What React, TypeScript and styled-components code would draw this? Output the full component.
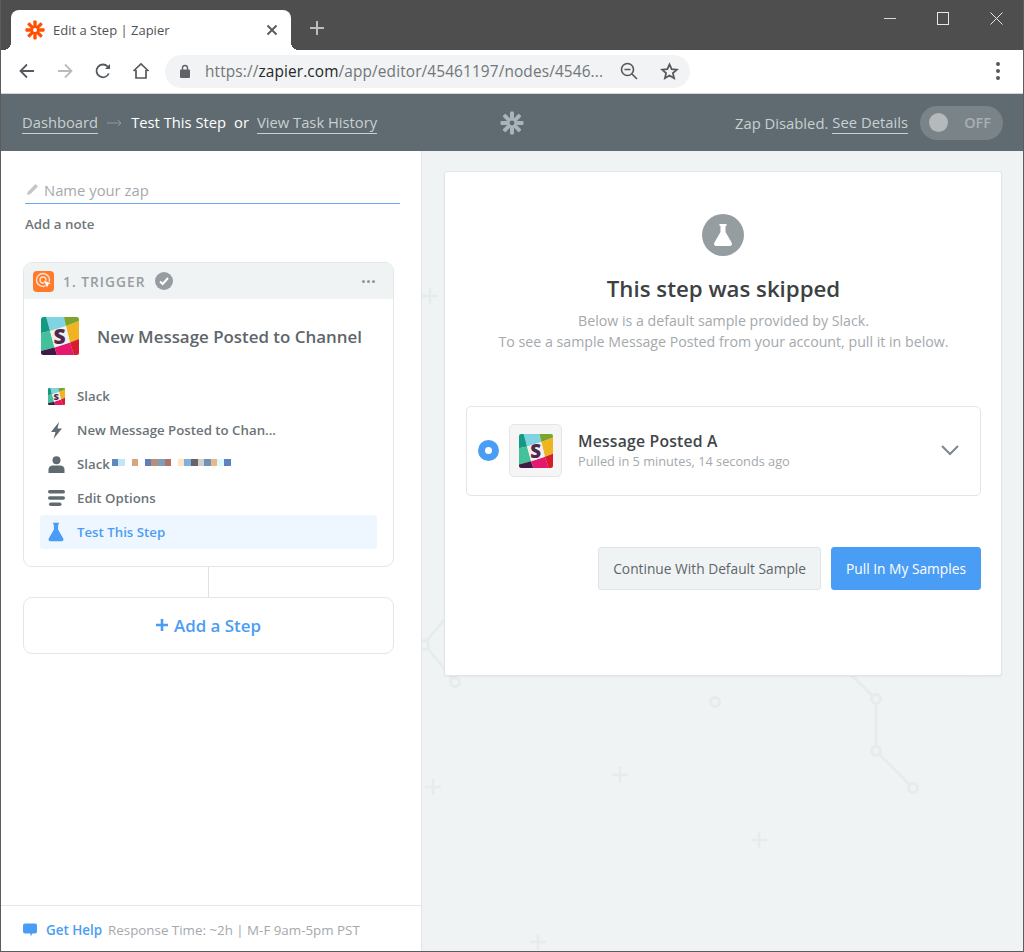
import React from 'react'
import styled, { createGlobalStyle } from 'styled-components'

const BLUE = '#4a9df5'
const SLATE = '#5f6b70'
const FONT = '"Open Sans", "Noto Sans", sans-serif'

const GlobalStyle = createGlobalStyle`
  html, body {
    margin: 0;
    padding: 0;
    background: white;
  }
  * {
    box-sizing: border-box;
  }
`

const Frame = styled.div`
  width: 1024px;
  height: 952px;
  display: flex;
  flex-direction: column;
  overflow: hidden;
  border: 1px solid #5c5c5c;
  border-top: 0;
  font-family: ${FONT};
`

const TitleBar = styled.div`
  height: 50px;
  flex: none;
  background: #4e4e4e;
  display: flex;
  align-items: flex-end;
  padding-left: 10px;
`

const Tab = styled.div`
  position: relative;
  width: 280px;
  height: 40px;
  background: white;
  border-radius: 8px 8px 0 0;
  display: flex;
  align-items: center;
  padding: 0 13px 0 14px;
  color: #4f5256;
  font-size: 13px;

  &::before, &::after {
    content: '';
    position: absolute;
    bottom: 0;
    width: 8px;
    height: 8px;
  }
  &::before {
    left: -8px;
    background: radial-gradient(circle at 0 0, transparent 8px, white 8px);
  }
  &::after {
    right: -8px;
    background: radial-gradient(circle at 100% 0, transparent 8px, white 8px);
  }
`

const TabTitle = styled.span`
  flex: 1;
  margin: 0 0 0 8px;
`

const NewTab = styled.div`
  margin: 0 0 12px 19px;
  height: 20px;
  display: flex;
  align-items: center;
`

const WindowControls = styled.div`
  margin-left: auto;
  align-self: flex-start;
  display: flex;
  gap: 41px;
  align-items: center;
  padding: 12px 20px 0 0;
`

const ToolBar = styled.div`
  height: 44px;
  flex: none;
  background: white;
  border-bottom: 1px solid #d2d4d6;
  display: flex;
  align-items: center;
  padding: 0 0 1px 17px;
`

const NavIcons = styled.div`
  display: flex;
  align-items: center;
  gap: 20px;
  width: 147px;
`

const Omnibox = styled.div`
  width: 525px;
  height: 33px;
  border-radius: 17px;
  background: #f1f3f4;
  display: flex;
  align-items: center;
  padding-left: 14px;
  font-size: 15.4px;
  color: #72767a;
  white-space: nowrap;
`

const Host = styled.span`
  color: #26282b;
`

const Url = styled.span`
  margin-left: 14px;
  flex: 1;
  letter-spacing: 0.12px;
`

const OmniIcons = styled.div`
  display: flex;
  gap: 22px;
  align-items: center;
  padding-right: 11px;
`

const MenuDots = styled.div`
  margin-left: auto;
  margin-right: 23px;
  display: flex;
  flex-direction: column;
  gap: 3px;

  span {
    width: 4px;
    height: 4px;
    border-radius: 50%;
    background: #55585c;
  }
`

const AppHeader = styled.header`
  height: 57px;
  flex: none;
  background: ${SLATE};
  display: flex;
  align-items: center;
  padding: 0 20px 0 21px;
  font-size: 14.75px;
  position: relative;
`

const HeaderLink = styled.a`
  color: #c9d0d3;
  border-bottom: 1px solid #c9d0d3;
  line-height: 21px;
`

const HeaderArrow = styled.span`
  margin: 0 9px;
  display: flex;
`

const HeaderText = styled.span`
  color: white;
  margin-right: 8px;
  line-height: 21px;
`

const HeaderLogo = styled.div`
  position: absolute;
  left: 499px;
  top: 17px;
  display: flex;
`

const HeaderRight = styled.div`
  margin-left: auto;
  display: flex;
  align-items: center;
  font-size: 14.8px;
  color: #c9d0d3;
`

const DisabledLabel = styled.span`
  margin-right: 4px;
`

const Toggle = styled.div`
  width: 83px;
  height: 34px;
  margin-left: 12px;
  border-radius: 17px;
  background: #7a8488;
  display: flex;
  align-items: center;
  justify-content: space-between;
  padding: 0 12px 0 9px;
  color: #aab0b3;
  font-weight: 600;
  font-size: 14.5px;
`

const ToggleKnob = styled.span`
  width: 19px;
  height: 19px;
  border-radius: 50%;
  background: #b4b9bc;
`

const Body = styled.div`
  flex: 1;
  display: flex;
  min-height: 0;
`

const Sidebar = styled.aside`
  width: 421px;
  flex: none;
  background: white;
  border-right: 1px solid #e1e5e7;
  display: flex;
  flex-direction: column;
`

const SidebarContent = styled.div`
  flex: 1;
  padding: 27px 28px 0 22px;
`

const NameRow = styled.div`
  margin-left: 2px;
  width: 375px;
  height: 26px;
  display: flex;
  align-items: center;
  border-bottom: 1px solid #6aa9ef;
  color: #a4a9ad;
  font-size: 14.8px;
  gap: 5px;
  padding: 0 0 2px 1px;
`

const AddNote = styled.div`
  margin: 11px 0 0 2px;
  font-size: 13.3px;
  font-weight: 600;
  color: #6f767a;
  line-height: 18px;
`

const StepCard = styled.section`
  margin-top: 29px;
  width: 371px;
  border: 1px solid #e3e6e8;
  border-radius: 9px;
  overflow: hidden;
`

const StepHeader = styled.div`
  height: 36px;
  background: #f0f3f4;
  display: flex;
  align-items: center;
  padding: 0 18px 0 9px;
`

const TriggerBadge = styled.div`
  width: 21px;
  height: 21px;
  border-radius: 4px;
  background: #ff7a2b;
  display: flex;
  align-items: center;
  justify-content: center;
`

const StepLabel = styled.span`
  margin: 0 9px 0 9px;
  font-size: 13.7px;
  font-weight: 600;
  letter-spacing: 1.05px;
  color: #969da0;
`

const Check = styled.span`
  width: 18px;
  height: 18px;
  border-radius: 50%;
  background: #969da0;
  display: flex;
  align-items: center;
  justify-content: center;
`

const MoreDots = styled.div`
  margin-left: auto;
  display: flex;
  gap: 2px;

  span {
    width: 3px;
    height: 3px;
    border-radius: 50%;
    background: #8f979b;
  }
`

const StepBody = styled.div`
  padding: 0 16px 17px;
`

const StepTitle = styled.div`
  display: flex;
  align-items: center;
  height: 74px;
  margin-bottom: 6px;
  padding-left: 1px;
  gap: 18px;
  font-size: 16.9px;
  font-weight: 600;
  color: #5d666b;
  white-space: nowrap;
`

const StepRow = styled.div<{ $active?: boolean }>`
  height: 34px;
  display: flex;
  align-items: center;
  border-radius: 3px;
  padding-left: 6px;
  font-size: 13.25px;
  font-weight: 600;
  color: ${p => (p.$active ? BLUE : '#6b7378')};
  background: ${p => (p.$active ? '#eef6ff' : 'transparent')};
`

const RowIcon = styled.span`
  width: 20px;
  height: 20px;
  margin-right: 11px;
  display: flex;
  align-items: center;
  justify-content: center;
`

const Pixels = styled.span`
  display: flex;
  margin: -3px 0 0 2px;

  i {
    display: block;
    width: 6.6px;
    height: 7px;
  }
`

const Connector = styled.div`
  width: 1px;
  height: 30px;
  margin-left: 185px;
  background: #dfe2e4;
`

const AddStep = styled.div`
  width: 371px;
  height: 57px;
  border: 1px solid #e3e6e8;
  border-radius: 9px;
  display: flex;
  align-items: center;
  justify-content: center;
  padding-bottom: 1px;
  color: ${BLUE};
  font-size: 16.9px;
  font-weight: 600;
  gap: 6px;
`

const HelpBar = styled.footer`
  height: 46px;
  flex: none;
  border-top: 1px solid #e3e6e8;
  display: flex;
  align-items: center;
  padding: 2px 0 0 22px;
  font-size: 13.35px;
  color: #a4a9ad;
`

const HelpLink = styled.span`
  color: ${BLUE};
  font-weight: 600;
  font-size: 13.4px;
  margin: 0 6px 0 9px;
`

const Canvas = styled.main`
  flex: 1;
  position: relative;
  overflow: hidden;
  background: #eff3f4;
  padding: 20px 21px 0 22px;
`

const Pattern = styled.svg`
  position: absolute;
  left: 0;
  top: 0;
  width: 602px;
  height: 800px;
`

const Panel = styled.section`
  position: relative;
  width: 558px;
  height: 505px;
  background: white;
  border: 1px solid #e2e6e8;
  border-radius: 3px;
  box-shadow: 0 1px 2px rgba(0, 0, 0, 0.05);
  padding: 42px 20px 0 21px;
  display: flex;
  flex-direction: column;
`

const FlaskCircle = styled.div`
  width: 42px;
  height: 42px;
  margin-right: 2px;
  border-radius: 50%;
  background: #969da0;
  align-self: center;
  display: flex;
  align-items: center;
  justify-content: center;
`

const PanelTitle = styled.h2`
  margin: 18px 0 0;
  text-align: center;
  font-size: 22.25px;
  line-height: 30px;
  font-weight: 600;
  color: #3c4144;
`

const PanelText = styled.p`
  margin: 6px 0 0;
  text-align: center;
  font-size: 14.2px;
  line-height: 21px;
  color: #a4a9ad;
`

const SampleRow = styled.div`
  margin-top: 54px;
  height: 90px;
  border: 1px solid #e3e6e8;
  border-radius: 5px;
  display: flex;
  align-items: center;
  padding: 0 21px 1px 11px;
`

const Radio = styled.span`
  width: 21px;
  height: 21px;
  border-radius: 50%;
  border: 7px solid ${BLUE};
  background: white;
`

const SampleIcon = styled.div`
  width: 53px;
  height: 53px;
  margin-left: 10px;
  border: 1px solid #e3e6e8;
  border-radius: 5px;
  background: #f5f5f5;
  display: flex;
  align-items: center;
  justify-content: center;
`

const SampleText = styled.div`
  margin-left: 16px;
  flex: 1;
`

const SampleName = styled.div`
  font-size: 15.75px;
  line-height: 21.5px;
  font-weight: 600;
  color: #3f464a;
  letter-spacing: 0.2px;
`

const SampleMeta = styled.div`
  font-size: 12.75px;
  line-height: 17.5px;
  color: #a4a9ad;
`

const Actions = styled.div`
  margin-top: 51px;
  display: flex;
  justify-content: flex-end;
  gap: 10px;
`

const Button = styled.button<{ $primary?: boolean }>`
  height: 43px;
  padding: 0 14px;
  border-radius: 3px;
  font-family: ${FONT};
  font-size: 13.75px;
  border: 1px solid ${p => (p.$primary ? BLUE : '#e0e4e6')};
  background: ${p => (p.$primary ? BLUE : '#f0f3f4')};
  color: ${p => (p.$primary ? 'white' : '#5d666b')};
`

const FLASK = 'M8.500 1h7v2h-1v6l6.200 10.800c.8 1.500-.2 3.200-1.900 3.200H5.200c-1.700 0-2.700-1.700-1.900-3.200L9.500 9V3h-1z'

const SlackLogo = ({ size }: { size: number }) => (
  <svg width={size} height={size} viewBox="0 0 38 38">
    <defs>
      <clipPath id={`sl${size}`}>
        <rect width="38" height="38" rx="2.500" />
      </clipPath>
    </defs>
    <g clipPath={`url(#sl${size})`}>
      <rect width="38" height="38" fill="#e8e4df" />
      <polygon points="0,0 6,0 9,14 0,16" fill="#149a82" />
      <polygon points="0,16 9,14 13.500,30.500 0,34" fill="#44c09a" />
      <polygon points="0,34 13.500,30.500 16,38 0,38" fill="#3e1b45" />
      <polygon points="5,0 23,0 25,9 9,14" fill="#7fd3e2" />
      <polygon points="23,0 38,0 38,4 25,9" fill="#7ca52b" />
      <polygon points="25,9 38,4 38,22 29,25.500" fill="#eeb422" />
      <polygon points="13.500,30.500 29,25.500 33,38 16,38" fill="#e6186d" />
      <polygon points="29,25.500 38,22 38,38 33,38" fill="#d81c2d" />
      <polygon points="9,14 25,9 29,25.500 13.500,30.500" fill="#f3efea" />
      <text x="18.500" y="26.500" textAnchor="middle" fontFamily={FONT} fontWeight="800" fontSize="21" fill="#4c2a4f">S</text>
    </g>
  </svg>
)

const ZapierMark = ({ color, hole, size }: { color: string; hole: string; size: number }) => (
  <svg width={size} height={size} viewBox="0 0 24 24" fill={color}>
    {[0, 45, 90, 135, 180, 225, 270, 315].map(a => (
      <rect key={a} x="10" y="0.500" width="4" height="8" rx="1" transform={`rotate(${a} 12 12)`} />
    ))}
    <circle cx="12" cy="12" r="5" />
    <circle cx="12" cy="12" r="2.400" fill={hole} />
  </svg>
)

const PIXELS = ['#5f86bd', '#bfe6fa', '#fff', '#d6a67f', '#fff', '#5f7fb5', '#b98f7c', '#7f9fb9', '#ae7465', '#fff', '#fde5c0', '#7fb0e0', '#66646c', '#d5cfca', '#6f92b9', '#e9b78a', '#ddfbfb', '#5d83bd']

const App = () => (
  <>
    <GlobalStyle />
    <Frame>
      <TitleBar>
        <Tab>
          <ZapierMark color="#ff4f00" hole="white" size={20} />
          <TabTitle>Edit a Step | Zapier</TabTitle>
          <svg width="12" height="12" viewBox="0 0 12 12" stroke="#55585c" strokeWidth="1.800" fill="none">
            <path d="M1.500 1.500l9 9M10.500 1.500l-9 9" />
          </svg>
        </Tab>
        <NewTab>
          <svg width="14" height="14" viewBox="0 0 14 14" stroke="#bdbdbd" strokeWidth="2">
            <path d="M7 0v14M0 7h14" />
          </svg>
        </NewTab>
        <WindowControls>
          <svg width="12" height="13" viewBox="0 0 12 13" stroke="#d8d8d8" strokeWidth="1">
            <path d="M0 6.500h12" />
          </svg>
          <svg width="12" height="13" viewBox="0 0 12 13" stroke="#e8e8e8" strokeWidth="1" fill="none">
            <rect x="0.500" y="0.500" width="11" height="12" />
          </svg>
          <svg width="13" height="13" viewBox="0 0 13 13" stroke="#e8e8e8" strokeWidth="1">
            <path d="M0.500 0.500l12 12M12.500 0.500l-12 12" />
          </svg>
        </WindowControls>
      </TitleBar>
      <ToolBar>
        <NavIcons>
          <svg width="18" height="18" viewBox="0 0 18 18" fill="none" stroke="#55585c" strokeWidth="1.800">
            <path d="M16 9H3M9 2.500L2.500 9 9 15.500" />
          </svg>
          <svg width="18" height="18" viewBox="0 0 18 18" fill="none" stroke="#b9bcbf" strokeWidth="1.800">
            <path d="M2 9h13M9 2.500L15.500 9 9 15.500" />
          </svg>
          <svg width="18" height="18" viewBox="0 0 18 18" fill="none" stroke="#55585c" strokeWidth="1.800">
            <path d="M14.800 11.500A6.400 6.400 0 1 1 13.600 4.500L15.500 6.500" />
            <path d="M16 2v5h-5" fill="#55585c" stroke="none" />
          </svg>
          <svg width="18" height="18" viewBox="0 0 18 18" fill="none" stroke="#55585c" strokeWidth="1.700">
            <path d="M1.500 9L9 2l7.500 7M4 8v8h10V8" />
          </svg>
        </NavIcons>
        <Omnibox>
          <svg width="12" height="14" viewBox="0 0 12 14" fill="#5f6368">
            <path d="M2 5.500h8a1 1 0 0 1 1 1V13a1 1 0 0 1-1 1H2a1 1 0 0 1-1-1V6.500a1 1 0 0 1 1-1z" />
            <path d="M3.500 6V4a2.500 2.500 0 0 1 5 0v2" fill="none" stroke="#5f6368" strokeWidth="1.400" />
          </svg>
          <Url>
            https://<Host>zapier.com</Host>/app/editor/45461197/nodes/4546...
          </Url>
          <OmniIcons>
            <svg width="18" height="18" viewBox="0 0 18 18" fill="none" stroke="#55585c" strokeWidth="1.600">
              <circle cx="7.500" cy="7.500" r="6" />
              <path d="M4.500 7.500h6M12 12l5 5" />
            </svg>
            <svg width="19" height="19" viewBox="0 0 24 24" fill="none" stroke="#55585c" strokeWidth="2.200">
              <path d="M12 3l2.700 6.100 6.600.6-5 4.400 1.500 6.500L12 17.200l-5.800 3.400 1.500-6.500-5-4.400 6.600-.6z" />
            </svg>
          </OmniIcons>
        </Omnibox>
        <MenuDots>
          <span />
          <span />
          <span />
        </MenuDots>
      </ToolBar>
      <AppHeader>
        <HeaderLink>Dashboard</HeaderLink>
        <HeaderArrow>
          <svg width="15" height="8" viewBox="0 0 15 8" fill="none" stroke="#8f9a9f" strokeWidth="1">
            <path d="M0 4h14M11 1l3 3-3 3" />
          </svg>
        </HeaderArrow>
        <HeaderText>Test This Step</HeaderText>
        <HeaderText>or</HeaderText>
        <HeaderLink>View Task History</HeaderLink>
        <HeaderLogo>
          <ZapierMark color="#aab3b7" hole={SLATE} size={24} />
        </HeaderLogo>
        <HeaderRight>
          <DisabledLabel>Zap Disabled.</DisabledLabel>
          <HeaderLink>See Details</HeaderLink>
          <Toggle>
            <ToggleKnob />
            OFF
          </Toggle>
        </HeaderRight>
      </AppHeader>
      <Body>
        <Sidebar>
          <SidebarContent>
            <NameRow>
              <svg width="13" height="13" viewBox="0 0 13 13" fill="#c3c7ca">
                <path d="M1 12l.8-3.200L9.500 1 12 3.500 4.200 11.200z" />
              </svg>
              Name your zap
            </NameRow>
            <AddNote>Add a note</AddNote>
            <StepCard>
              <StepHeader>
                <TriggerBadge>
                  <svg width="18" height="18" viewBox="0 0 18 18" fill="none" stroke="#ffe0cc" strokeWidth="1.400">
                    <circle cx="8" cy="8" r="6.500" />
                    <circle cx="8" cy="8" r="3" />
                    <path d="M8 8l9 3.200-3.400 1.400-1.500 3.600z" fill="white" stroke="#ff7a2b" strokeWidth="0.800" />
                  </svg>
                </TriggerBadge>
                <StepLabel>1. TRIGGER</StepLabel>
                <Check>
                  <svg width="10" height="10" viewBox="0 0 10 10" fill="none" stroke="white" strokeWidth="2">
                    <path d="M1 5.500l2.700 2.500L9 2" />
                  </svg>
                </Check>
                <MoreDots>
                  <span />
                  <span />
                  <span />
                </MoreDots>
              </StepHeader>
              <StepBody>
                <StepTitle>
                  <SlackLogo size={38} />
                  New Message Posted to Channel
                </StepTitle>
                <StepRow>
                  <RowIcon>
                    <SlackLogo size={17} />
                  </RowIcon>
                  Slack
                </StepRow>
                <StepRow>
                  <RowIcon>
                    <svg width="11" height="17" viewBox="0 0 11 17" fill="#5f6b70">
                      <path d="M8 0L0 10h4.500L2.500 17 11 6.500H6.500z" />
                    </svg>
                  </RowIcon>
                  New Message Posted to Chan...
                </StepRow>
                <StepRow>
                  <RowIcon>
                    <svg width="17" height="17" viewBox="0 0 17 17" fill="#5f6b70">
                      <circle cx="8.500" cy="4.200" r="4" />
                      <path d="M.5 17v-3.500C.5 11 2.500 9.500 5 9.500h7c2.500 0 4.500 1.500 4.500 4V17z" />
                    </svg>
                  </RowIcon>
                  Slack
                  <Pixels>
                    {PIXELS.map((c, i) => (
                      <i key={i} style={{ background: c }} />
                    ))}
                  </Pixels>
                </StepRow>
                <StepRow>
                  <RowIcon>
                    <svg width="17" height="16" viewBox="0 0 17 16" fill="#5f6b70">
                      <rect x="0" y="0" width="17" height="3.400" rx="1.700" />
                      <rect x="0" y="6.300" width="17" height="3.400" rx="1.700" />
                      <rect x="1" y="12.600" width="12.500" height="3.400" rx="1.700" />
                    </svg>
                  </RowIcon>
                  Edit Options
                </StepRow>
                <StepRow $active>
                  <RowIcon>
                    <svg width="20" height="20" viewBox="0 0 24 24" fill={BLUE}>
                      <path d={FLASK} />
                    </svg>
                  </RowIcon>
                  Test This Step
                </StepRow>
              </StepBody>
            </StepCard>
            <Connector />
            <AddStep>
              <svg width="12" height="12" viewBox="0 0 12 12" stroke={BLUE} strokeWidth="2.600">
                <path d="M6 0v12M0 6h12" />
              </svg>
              Add a Step
            </AddStep>
          </SidebarContent>
          <HelpBar>
            <svg width="14" height="14" viewBox="0 0 14 14" fill={BLUE}>
              <path d="M2 .5h10a2 2 0 0 1 2 2v6a2 2 0 0 1-2 2H9.500L7.500 13.500v-3H2a2 2 0 0 1-2-2v-6a2 2 0 0 1 2-2z" />
            </svg>
            <HelpLink>Get Help</HelpLink>
            Response Time: ~2h | M-F 9am-5pm PST
          </HelpBar>
        </Sidebar>
        <Canvas>
          <Pattern viewBox="0 0 602 800" fill="none" stroke="#e6ebec" strokeWidth="2.500">
            <path d="M2 493L22 469M2 493L33 531" />
            <path d="M429 524L454 548V600L491 637" />
            <path d="M8 137v16M0 145h16M198 616v16M190 624h16M11 628v16M3 636h16M337 681v16M329 689h16M116 783v16M108 791h16M554 516v10" />
            <g strokeWidth="3">
              <circle cx="2" cy="494" r="4.500" fill="#eff3f4" />
              <circle cx="33" cy="531" r="4.500" fill="#eff3f4" />
              <circle cx="293" cy="551" r="4.500" fill="#eff3f4" />
              <circle cx="454" cy="548" r="4.500" fill="#eff3f4" />
              <circle cx="454" cy="600" r="4.500" fill="#eff3f4" />
              <circle cx="491" cy="637" r="4.500" fill="#eff3f4" />
            </g>
          </Pattern>
          <Panel>
            <FlaskCircle>
              <svg width="24" height="24" viewBox="0 0 24 24" fill="white">
                <path d={FLASK} />
              </svg>
            </FlaskCircle>
            <PanelTitle>This step was skipped</PanelTitle>
            <PanelText>
              Below is a default sample provided by Slack.
              <br />
              To see a sample Message Posted from your account, pull it in below.
            </PanelText>
            <SampleRow>
              <Radio />
              <SampleIcon>
                <SlackLogo size={34} />
              </SampleIcon>
              <SampleText>
                <SampleName>Message Posted A</SampleName>
                <SampleMeta>Pulled in 5 minutes, 14 seconds ago</SampleMeta>
              </SampleText>
              <svg width="18" height="11" viewBox="0 0 18 11" fill="none" stroke="#7f888c" strokeWidth="2">
                <path d="M1 1l8 8 8-8" />
              </svg>
            </SampleRow>
            <Actions>
              <Button>Continue With Default Sample</Button>
              <Button $primary>Pull In My Samples</Button>
            </Actions>
          </Panel>
        </Canvas>
      </Body>
    </Frame>
  </>
)

export default App
